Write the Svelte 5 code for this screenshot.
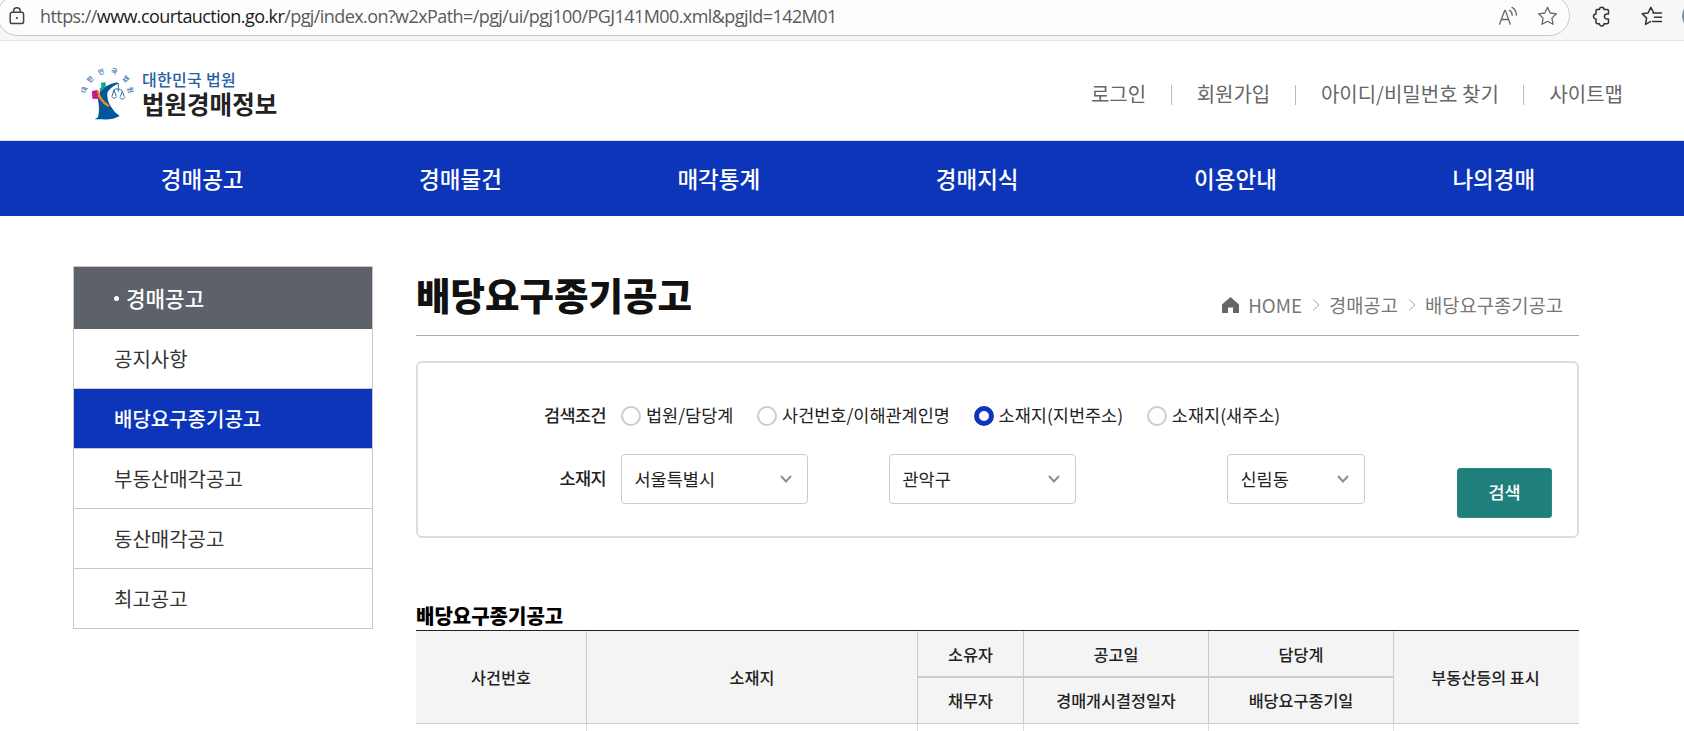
<script>
	let menus = ['경매공고', '경매물건', '매각통계', '경매지식', '이용안내', '나의경매'];
	let links = ['로그인', '회원가입', '아이디/비밀번호 찾기', '사이트맵'];
	let sideMenus = ['공지사항', '배당요구종기공고', '부동산매각공고', '동산매각공고', '최고공고'];
	let conditions = ['법원/담당계', '사건번호/이해관계인명', '소재지(지번주소)', '소재지(새주소)'];

	let activeMenu = '배당요구종기공고';
	let condition = '소재지(지번주소)';

	// letters around the emblem
	let ring = [
		{ t: '대', x: 43, y: 103, r: -75 },
		{ t: '한', x: 61, y: 71, r: -48 },
		{ t: '민', x: 93, y: 49, r: -15 },
		{ t: '국', x: 132, y: 47, r: 15 },
		{ t: '법', x: 167, y: 70, r: 48 },
		{ t: '원', x: 181, y: 103, r: 75 }
	];
</script>

<div class="browser">
	<div class="address">
		<svg class="lock" width="16" height="18" viewBox="0 0 16 18">
			<rect x="1.2" y="5.2" width="13.4" height="11.4" rx="2.2" />
			<path d="M4.6 5V4a3.3 3.3 0 0 1 6.6 0v1" />
			<circle cx="7.9" cy="11" r="1.1" />
		</svg>
		<span class="url">https://<b>www.courtauction.go.kr</b>/pgj/index.on?w2xPath=/pgj/ui/pgj100/PGJ141M00.xml&pgjId=142M01</span>
		<svg class="read" width="20" height="20" viewBox="0 0 20 20">
			<path d="M1.500 18.200 6.700 4.400h.6L12.300 18.200M3.300 13.500h7.200M11.500 4.200q2.700 1.800 2.700 5M14 1.400q4.400 2.600 4.400 7.800" />
		</svg>
		<svg class="star" width="21" height="20" viewBox="0 0 21 20">
			<path d="M10.500 1.400 13.200 7l6.200.8-4.500 4.300 1.100 6.200-5.500-3-5.500 3 1.100-6.200L1.600 7.800 7.800 7Z" />
		</svg>
	</div>
	<svg class="puzzle" width="20" height="21" viewBox="0 0 20 21">
		<path d="M4.500 3.500H7.400a2.300 2.300 0 0 1 4.600 0H15a1.500 1.500 0 0 1 1.500 1.500V8h-1.600a2.400 2.400 0 0 0 0 5h1.600v3.200a1.500 1.500 0 0 1-1.500 1.500H12a2.300 2.300 0 0 1-4.600 0H5.500A1.500 1.500 0 0 1 4 16.200V13a2.500 2.500 0 0 1 0-5V5a1.500 1.500 0 0 1 1.500-1.500" />
	</svg>
	<i class="bar"></i>
	<svg class="favs" width="22" height="20" viewBox="0 0 22 20">
		<path d="M12.600 6.500 9.800 1.400 7.100 7 1.200 7.800 5.600 12.100 4.500 18.300 9.500 15.600M12 7h8.500M13.500 11.300h7M11.500 15.600h9" />
	</svg>
	<i class="avatar"></i>
</div>

<header>
	<div class="logo">
		<svg width="56" height="54" viewBox="30 34 168 162">
			{#each ring as c}
				<text transform="translate({c.x} {c.y}) rotate({c.r})" y="7">{c.t}</text>
			{/each}
			<path fill="#02569b" d="M90 108Q104 88 142 80L144 84Q118 96 112 112Q110 132 122 152Q132 170 149 181Q125 194 98 191L74 191 84 185Q90 160 84 132Z" />
			<path fill="#c5168c" d="M66 106 82 103 86 130 67 129Z" />
			<path fill="#f08a1d" d="M81 103 87 105Q92 132 119 149L115 154Q84 139 81 103Z" />
			<path fill="#12a58c" d="M93 81 107 80 107 92 98 103 88 106 90 98 94 95Z" />
			<path class="scale" d="M145 82V108M131 103Q144 95 158 106M132 103 126 121M132 103 138 121M157 107 151 123M157 107 163 123M125 122Q132 134 140 122M149 125Q157 136 165 125" />
		</svg>
		<div class="logo-text">
			<span>대한민국 법원</span>
			<strong>법원경매정보</strong>
		</div>
	</div>
	<ul class="links">
		{#each links as link}
			<li>{link}</li>
		{/each}
	</ul>
</header>

<nav>
	<ul>
		{#each menus as menu}
			<li>{menu}</li>
		{/each}
	</ul>
</nav>

<div class="container">
	<aside>
		<h2>경매공고</h2>
		<ul>
			{#each sideMenus as menu}
				<li class:active={menu === activeMenu}>{menu}</li>
			{/each}
		</ul>
	</aside>

	<main>
		<div class="title">
			<h1>배당요구종기공고</h1>
			<div class="breadcrumb">
				<svg width="17" height="16" viewBox="0 0 17 16">
					<path fill="#666" d="M8.500 0 17 7.500V16H11V10.500H6V16H0V7.500Z" />
				</svg>
				<span>HOME</span>
				<svg class="gt" width="8" height="12" viewBox="0 0 8 12"><path d="M1 .5 7 6 1 11.500" /></svg>
				<span>경매공고</span>
				<svg class="gt" width="8" height="12" viewBox="0 0 8 12"><path d="M1 .5 7 6 1 11.500" /></svg>
				<span>배당요구종기공고</span>
			</div>
		</div>

		<div class="search">
			<div class="fields">
				<div class="row">
					<span class="label">검색조건</span>
					{#each conditions as item}
						<label class="radio">
							<input type="radio" name="condition" value={item} bind:group={condition} />
							<span>{item}</span>
						</label>
					{/each}
				</div>
				<div class="row selects">
					<span class="label">소재지</span>
					<div class="select sido">서울특별시<svg width="12" height="8" viewBox="0 0 12 8"><path d="M1 1 6 6.500 11 1" /></svg></div>
					<div class="select sigu">관악구<svg width="12" height="8" viewBox="0 0 12 8"><path d="M1 1 6 6.500 11 1" /></svg></div>
					<div class="select dong">신림동<svg width="12" height="8" viewBox="0 0 12 8"><path d="M1 1 6 6.500 11 1" /></svg></div>
				</div>
			</div>
			<button>검색</button>
		</div>

		<h3>배당요구종기공고</h3>
		<table>
			<colgroup>
				<col style="width: 171px" />
				<col style="width: 331px" />
				<col style="width: 106px" />
				<col style="width: 185px" />
				<col style="width: 185px" />
				<col style="width: 185px" />
			</colgroup>
			<thead>
				<tr>
					<th rowspan="2">사건번호</th>
					<th rowspan="2">소재지</th>
					<th class="upper">소유자</th>
					<th class="upper">공고일</th>
					<th class="upper">담당계</th>
					<th rowspan="2">부동산등의 표시</th>
				</tr>
				<tr>
					<th>채무자</th>
					<th>경매개시결정일자</th>
					<th>배당요구종기일</th>
				</tr>
			</thead>
			<tbody>
				<tr>
					<td></td>
					<td></td>
					<td></td>
					<td></td>
					<td></td>
					<td></td>
				</tr>
			</tbody>
		</table>
	</main>
</div>

<style>
	:global(body) {
		overflow: hidden;
		background: #fff;
		font-family: 'Noto Sans CJK KR', sans-serif;
	}

	:global(#app) {
		height: 731px;
		overflow: hidden;
	}

	ul {
		list-style: none;
		margin: 0;
		padding: 0;
	}

	svg {
		flex: none;
	}

	.browser {
		box-sizing: border-box;
		display: flex;
		height: 41px;
		background: #f7f7f7;
		border-bottom: 1px solid #e5e5e5;
		overflow: hidden;
	}

	.address {
		box-sizing: border-box;
		display: flex;
		align-items: center;
		width: 1573px;
		height: 41px;
		margin: -5px 0 0 -3px;
		padding: 0 11px 0 11px;
		background: #fdfdfd;
		border: 1px solid #c8c8c8;
		border-radius: 21px;
		flex: none;
	}

	.address svg,
	.puzzle,
	.favs {
		fill: none;
		stroke: #666;
		stroke-width: 1.3;
		stroke-linejoin: round;
		stroke-linecap: round;
	}

	.address .lock {
		stroke: #444;
		stroke-width: 1.5;
	}

	.lock circle {
		fill: #444;
		stroke: none;
	}

	.url {
		flex: 1;
		margin-left: 15px;
		font-family: 'Open Sans', sans-serif;
		font-size: 18px;
		letter-spacing: -0.58px;
		color: #5a5a5a;
		white-space: nowrap;
	}

	.url b {
		font-weight: 400;
		color: #1a1a1a;
	}

	.star {
		margin-left: 19px;
	}

	.browser .puzzle,
	.browser .favs {
		stroke: #333;
		stroke-width: 1.5;
		margin-top: 6px;
	}

	.puzzle {
		margin-left: 22px;
	}

	.bar {
		width: 1px;
		height: 20px;
		margin: 6px 15px 0 14px;
		background: #ccc;
	}

	.avatar {
		width: 28px;
		height: 28px;
		margin: 2px 0 0 19px;
		border-radius: 50%;
		background: #7c8e95;
		flex: none;
	}

	header {
		box-sizing: border-box;
		display: flex;
		justify-content: space-between;
		height: 100px;
		padding: 0 61px 0 80px;
		border-bottom: 1px solid #ddd;
	}

	.logo {
		display: flex;
		padding-top: 26px;
	}

	.logo svg {
		overflow: visible;
	}

	.logo text {
		font-size: 20px;
		font-weight: 700;
		fill: #3f7bb8;
		text-anchor: middle;
	}

	.scale {
		fill: none;
		stroke: #2b6cae;
		stroke-width: 3;
	}

	.logo-text {
		display: flex;
		flex-direction: column;
		gap: 3px;
		margin: 3px 0 0 6px;
	}

	.logo-text span {
		font-size: 16px;
		font-weight: 500;
		line-height: 18px;
		letter-spacing: 0.3px;
		color: #2560a8;
	}

	.logo-text strong {
		font-size: 24.5px;
		font-weight: 700;
		line-height: 25px;
		color: #222;
	}

	.links {
		display: flex;
		align-items: center;
		height: 105px;
	}

	.links li {
		display: flex;
		align-items: center;
		font-size: 20px;
		line-height: 28px;
		color: #666;
	}

	.links li + li::before {
		content: '';
		width: 1px;
		height: 20px;
		margin: 2px 25px 0 24.600px;
		background: #bbb;
	}

	nav {
		height: 75px;
		padding: 0 61px 0 73px;
		background: #0d35ba;
	}

	nav ul {
		display: grid;
		grid-template-columns: repeat(6, 1fr);
	}

	nav li {
		font-size: 22.5px;
		font-weight: 500;
		line-height: 75px;
		text-align: center;
		color: #fff;
	}

	.container {
		display: flex;
		align-items: flex-start;
		gap: 43px;
		padding: 50px 0 0 73px;
	}

	aside {
		box-sizing: border-box;
		width: 300px;
		border: 1px solid #c8c8c8;
		flex: none;
	}

	aside h2 {
		display: flex;
		align-items: center;
		height: 62px;
		margin: 0;
		padding-left: 40px;
		background: #5d6169;
		color: #fff;
		font-size: 21.25px;
		font-weight: 500;
		line-height: 60px;
	}

	aside h2::before {
		content: '';
		width: 5px;
		height: 5px;
		margin-right: 7px;
		border-radius: 50%;
		background: #fff;
	}

	aside li {
		height: 59px;
		padding-left: 40px;
		font-size: 20px;
		line-height: 60px;
		color: #333;
		border-bottom: 1px solid #c8c8c8;
	}

	aside li:last-child {
		border-bottom: none;
	}

	aside li.active {
		background: #0d35ba;
		color: #fff;
		font-weight: 500;
	}

	main {
		width: 1163px;
	}

	.title {
		box-sizing: border-box;
		display: flex;
		justify-content: space-between;
		height: 70px;
		padding-right: 16px;
		border-bottom: 1px solid #aaa;
	}

	h1 {
		margin: 0;
		font-size: 37.5px;
		font-weight: 900;
		line-height: 56px;
		color: #111;
	}

	.breadcrumb {
		display: flex;
		align-items: center;
		height: 78px;
		font-size: 18.75px;
		color: #777;
	}

	.breadcrumb span {
		margin: 0 0 1px 9.500px;
	}

	.gt {
		margin-left: 9.500px;
		fill: none;
		stroke: #aaa;
	}

	.search {
		box-sizing: border-box;
		display: flex;
		justify-content: space-between;
		height: 177px;
		margin-top: 25px;
		padding: 0 25px 0 0;
		border: 2px solid #ddd;
		border-radius: 6px;
	}

	.row {
		display: flex;
		align-items: center;
		height: 26px;
		margin-top: 40px;
		font-size: 17.5px;
		color: #222;
	}

	.selects {
		height: 50px;
		margin-top: 25px;
	}

	.label {
		width: 188px;
		margin: 0 15px 3px 0;
		text-align: right;
		font-weight: 500;
		letter-spacing: -0.6px;
	}

	.radio {
		display: flex;
		align-items: center;
		height: 26px;
		margin-right: 23.700px;
		line-height: 24px;
		white-space: nowrap;
	}

	.radio span {
		margin-bottom: 3px;
	}

	.radio input {
		appearance: none;
		box-sizing: border-box;
		width: 20px;
		height: 20px;
		margin: 0 5px 0 0;
		border: 2px solid #ccc;
		border-radius: 50%;
	}

	.radio input:checked {
		border: 5px solid #0d35ba;
	}

	.select {
		box-sizing: border-box;
		display: flex;
		align-items: center;
		justify-content: space-between;
		width: 187px;
		height: 50px;
		padding: 0 15px 2px 12.500px;
		border: 1px solid #ccc;
		border-radius: 4px;
	}

	.select svg {
		margin-top: 2px;
		fill: none;
		stroke: #8a8f99;
		stroke-width: 2;
	}

	.sigu {
		margin-left: 81px;
	}

	.dong {
		width: 138px;
		margin-left: 151px;
	}

	button {
		width: 95px;
		height: 50px;
		margin: 105px 0 0;
		padding: 0 0 3px;
		border: 1px solid #2a8a86;
		border-radius: 3px;
		background: #1e7f7b;
		color: #fff;
		font-family: inherit;
		font-size: 17.5px;
		font-weight: 500;
	}

	h3 {
		margin: 64px 0 0;
		font-size: 20px;
		font-weight: 900;
		line-height: 28px;
		color: #000;
	}

	table {
		width: 1163px;
		table-layout: fixed;
		border-collapse: separate;
		border-spacing: 0;
		border-top: 1px solid #222;
	}

	th {
		box-sizing: border-box;
		height: 46px;
		padding: 0 0 1px;
		background: #f4f4f4;
		border-right: 1px solid #ccc;
		border-bottom: 1px solid #ccc;
		font-size: 16.25px;
		font-weight: 500;
		line-height: 24px;
		color: #222;
	}

	.upper {
		height: 47px;
		padding: 1px 0 0;
		border-bottom: 2px solid #c9ced3;
	}

	td {
		height: 46px;
		padding: 0;
		border-right: 1px solid #ddd;
	}

	th[rowspan]:last-child {
		padding-right: 2px;
	}

	th[rowspan]:last-child,
	td:last-child {
		border-right: none;
	}
</style>
